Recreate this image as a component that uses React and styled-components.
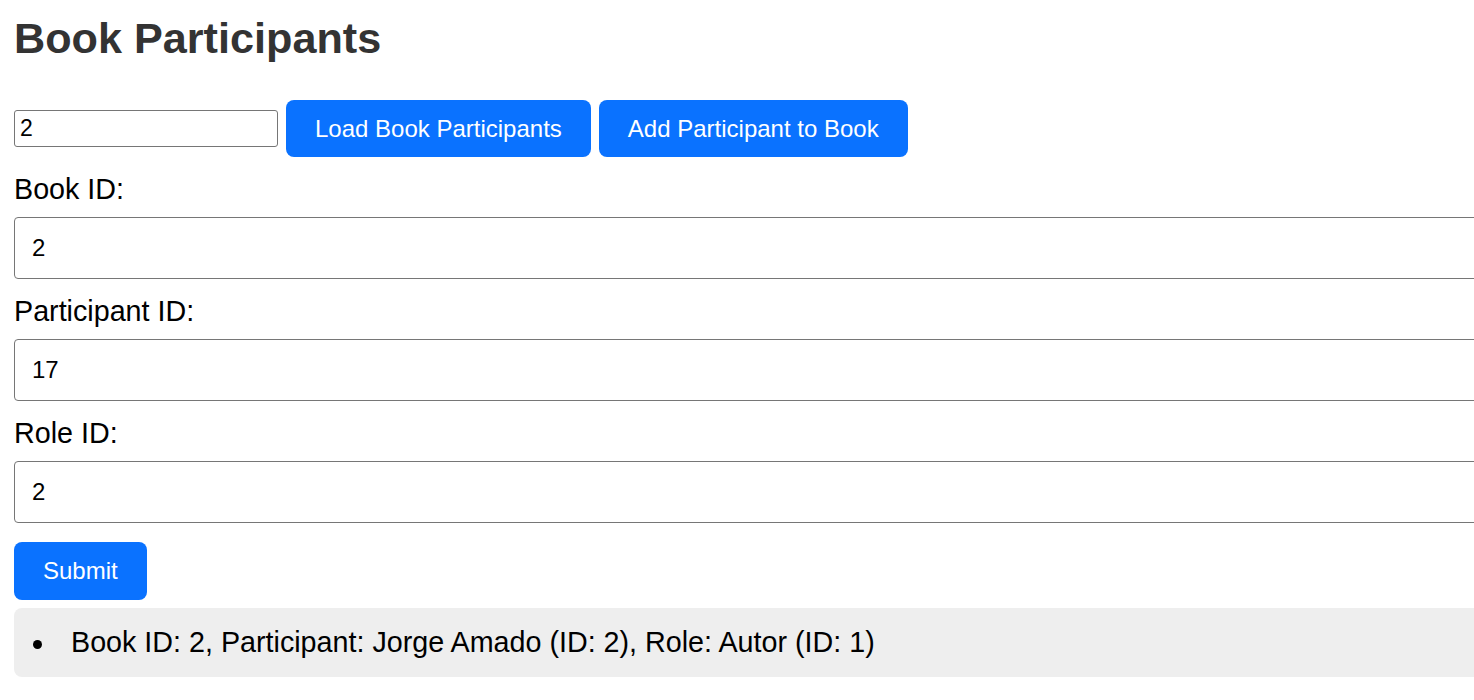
import React, { useState } from "react";
import styled, { createGlobalStyle } from "styled-components";

const GlobalStyle = createGlobalStyle`
  html, body {
    margin: 0;
    padding: 0;
    background: #fff;
    overflow-x: hidden;
  }
  body {
    font-family: "Liberation Sans", Arial, Helvetica, sans-serif;
  }
`;

const Page = styled.div`
  padding: 14px;
`;

const Title = styled.h1`
  margin: 0 0 36px;
  font-size: 43.2px;
  font-weight: bold;
  line-height: 1.15;
  color: #333;
`;

const Toolbar = styled.div`
  display: flex;
  align-items: center;
  gap: 8px;
`;

const SmallInput = styled.input`
  width: 253px;
  height: 27px;
  padding: 4px 4px 4px 5px;
  border: 1px solid #767676;
  border-radius: 3px;
  font-family: inherit;
  font-size: 23px;
  color: #000;
`;

const Button = styled.button`
  padding: 15px 29px;
  border: none;
  border-radius: 8px;
  background: #0a72ff;
  color: #fff;
  font-family: inherit;
  font-size: 24px;
  line-height: 1.15;
  cursor: pointer;
  margin-top: ${(p) => p.$top || 0}px;
`;

const Form = styled.form`
  display: flex;
  flex-direction: column;
  align-items: flex-start;
`;

const Label = styled.label`
  display: block;
  margin: 16px 0 11px;
  font-size: 28.7px;
  line-height: 1.15;
  color: #000;
`;

const Field = styled.input`
  display: block;
  width: 100%;
  height: 28px;
  padding: 16px 17px;
  border: 1px solid #767676;
  border-radius: 4px;
  font-family: inherit;
  font-size: 24px;
  color: #000;
`;

const Results = styled.ul`
  margin: 8px 0 0;
  padding: 18px;
  width: 100%;
  list-style: none;
  background: #eee;
  border-radius: 8px;
  font-size: 28.7px;
  line-height: 1.15;
  color: #000;
`;

const Item = styled.li`
  display: flex;

  &::before {
    content: "";
    flex: none;
    width: 9px;
    height: 9px;
    margin: 14px 29px 0 1px;
    border-radius: 50%;
    background: #000;
  }
`;

export default function App() {
  const [bookId, setBookId] = useState("2");
  const [form, setForm] = useState({ book: "2", participant: "17", role: "2" });
  const participants = [
    { bookId: 2, name: "Jorge Amado", id: 2, role: "Autor", roleId: 1 },
  ];

  const update = (key) => (e) => setForm({ ...form, [key]: e.target.value });

  return (
    <Page>
      <GlobalStyle />
      <Title>Book Participants</Title>
      <Toolbar>
        <SmallInput value={bookId} onChange={(e) => setBookId(e.target.value)} />
        <Button type="button">Load Book Participants</Button>
        <Button type="button">Add Participant to Book</Button>
      </Toolbar>
      <Form onSubmit={(e) => e.preventDefault()}>
        <Label>Book ID:</Label>
        <Field value={form.book} onChange={update("book")} />
        <Label>Participant ID:</Label>
        <Field value={form.participant} onChange={update("participant")} />
        <Label>Role ID:</Label>
        <Field value={form.role} onChange={update("role")} />
        <Button type="submit" $top={19}>
          Submit
        </Button>
        <Results>
          {participants.map((p) => (
            <Item key={p.bookId + "-" + p.id}>
              Book ID: {p.bookId}, Participant: {p.name} (ID: {p.id}), Role:{" "}
              {p.role} (ID: {p.roleId})
            </Item>
          ))}
        </Results>
      </Form>
    </Page>
  );
}
